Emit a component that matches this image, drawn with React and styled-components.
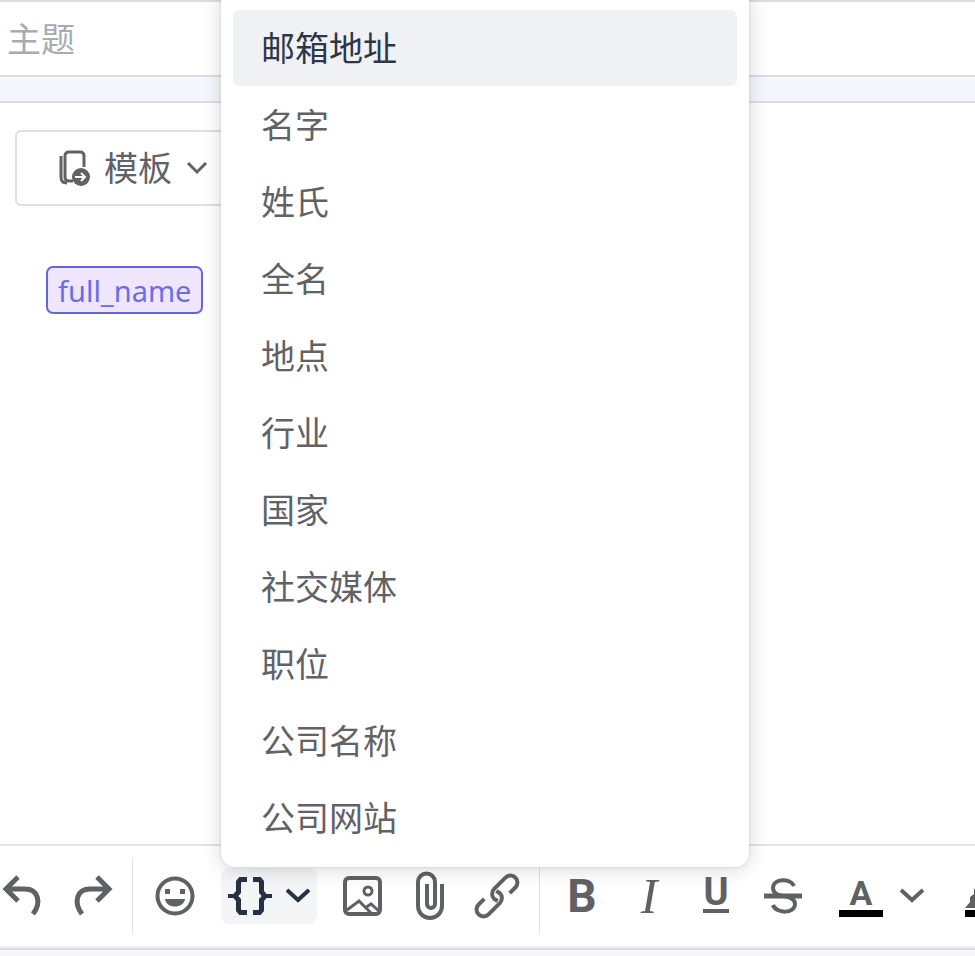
import React, { useState } from 'react';
import styled, { createGlobalStyle } from 'styled-components';

const GlobalStyle = createGlobalStyle`
    * {
        box-sizing: border-box;
    }
    body {
        margin: 0;
        overflow: hidden;
        background: #f5f7fd;
        font-family: 'Noto Sans', 'Noto Sans CJK SC', sans-serif;
        color: #606266;
    }
    button,
    input {
        font-family: inherit;
        color: inherit;
    }
`;

const Page = styled.div`
    display: flex;
    flex-direction: column;
    gap: 24px;
    min-height: 100vh;
    padding-bottom: 6px;
    overflow: hidden;
`;

const SubjectInput = styled.input`
    flex: none;
    width: 100%;
    height: 77px;
    padding: 0 7px;
    border: solid #dcdde4;
    border-width: 2px 0;
    border-radius: 0;
    background: #fff;
    font-size: 34px;
    outline: none;
    &::placeholder {
        color: #a8abb2;
        opacity: 1;
    }
`;

const Editor = styled.main`
    flex: 1;
    display: flex;
    flex-direction: column;
    background: #fff;
    border-top: 2px solid #dcdde4;
    border-bottom: 2px solid #d9dbe2;
`;

const Body = styled.div`
    flex: 1;
    display: flex;
    flex-direction: column;
    align-items: flex-start;
    gap: 60px;
    padding: 27px 15px;
`;

const TemplateButton = styled.button`
    display: flex;
    align-items: center;
    gap: 14px;
    height: 76px;
    padding: 0 41px;
    border: 2px solid #dcdfe3;
    border-radius: 6px;
    background: #fff;
    font-size: 34px;
    line-height: 48px;
`;

const Tag = styled.span`
    height: 48px;
    margin-left: 31px;
    padding: 0 10px;
    border: 2px solid #6366dc;
    border-radius: 7px;
    background: #efe6fd;
    color: #6a6de6;
    font-size: 29px;
    line-height: 46px;
`;

const Toolbar = styled.div`
    display: flex;
    align-items: center;
    height: 104px;
    border-top: 2px solid #e2e3e5;
    border-bottom: 2px solid #eeeff2;
`;

const Group = styled.div`
    flex: none;
    display: flex;
    align-items: center;
    gap: ${props => props.$gap || 11}px;
`;

const Section = styled(Group)`
    padding: 0 14px;
`;

const History = styled(Group)`
    padding-right: 16px;
`;

const Divider = styled.span`
    flex: none;
    width: 1px;
    height: 76px;
    background: #dfe2e6;
`;

const ToolButton = styled.button`
    display: flex;
    align-items: center;
    justify-content: center;
    width: ${props => props.$width || 56}px;
    height: 56px;
    padding: 0;
    border: none;
    background: transparent;
    color: #606164;
`;

const Letter = styled.span`
    font-family: ${props => (props.$serif ? "'Liberation Serif', serif" : 'Roboto, sans-serif')};
    font-size: ${props => props.$size || 46}px;
    font-style: ${props => (props.$serif ? 'italic' : 'normal')};
    font-weight: ${props => props.$weight || 700};
    line-height: 48px;
`;

const UnderlineLetter = styled(Letter)`
    height: 34px;
    border-bottom: 4px solid currentColor;
    line-height: 26px;
`;

const ColorButton = styled(ToolButton)`
    justify-content: flex-start;
    gap: 17px;
    width: 85px;
`;

const Swatch = styled.span`
    display: flex;
    align-items: flex-end;
    justify-content: center;
    width: 44px;
    height: 42px;
    border-bottom: 7px solid #000;
    ${Letter} {
        line-height: 34px;
    }
`;

const Dropdown = styled.div`
    position: relative;
`;

const VariableButton = styled(ToolButton)`
    gap: 14px;
    width: 96px;
    border-radius: 8px;
    background: #f4f5f6;
    color: #263244;
`;

const Menu = styled.ul`
    position: absolute;
    left: 0;
    bottom: 57px;
    z-index: 1;
    display: flex;
    flex-direction: column;
    gap: 1px;
    width: 528px;
    margin: 0;
    padding: 24px 12px 11px;
    border-radius: 14px;
    background: #fff;
    box-shadow: 0 2px 20px rgba(0, 0, 0, 0.16), 0 0 3px rgba(0, 0, 0, 0.12);
    list-style: none;
`;

const MenuItem = styled.button`
    display: block;
    width: 100%;
    height: 76px;
    padding: 0 28px;
    border: none;
    border-radius: 6px;
    background: ${props => (props.$active ? '#eff1f5' : 'transparent')};
    color: ${props => (props.$active ? '#2d3748' : '#606266')};
    font-size: 34px;
    line-height: 74px;
    text-align: left;
`;

function Icon({ width, height, stroke = 4, children }) {
    return (
        <svg
            width={width}
            height={height}
            viewBox={`0 0 ${width} ${height}`}
            fill="none"
            stroke="currentColor"
            strokeWidth={stroke}
            aria-hidden="true"
        >
            {children}
        </svg>
    );
}

const UndoIcon = () => (
    <Icon width={44} height={44} stroke={5}>
        <path d="M18 3L6 15L18 27M5 15H25C38 15 42 28 33 40" />
    </Icon>
);

const RedoIcon = () => (
    <Icon width={44} height={44} stroke={5}>
        <path d="M25 3L37 15L25 27M38 15H18C5 15 1 28 10 40" />
    </Icon>
);

const SmileIcon = () => (
    <Icon width={40} height={40}>
        <circle cx="20" cy="20" r="17.5" />
        <path
            d="M10 13h5v5h-5zM25 13h5v5h-5zM10 23h20c-1 10-19 10-20 0z"
            fill="currentColor"
            stroke="none"
        />
    </Icon>
);

const BracesIcon = () => (
    <Icon width={44} height={40} stroke={5}>
        <path d="M19 3.5H12.5L10.5 6V16L7 20L10.5 24V34L12.5 36.5H19" />
        <path d="M25 3.5H31.5L33.5 6V16L37 20L33.5 24V34L31.5 36.5H25" />
        <path d="M0 20H8M36 20H44" strokeWidth="4" />
    </Icon>
);

const ChevronIcon = () => (
    <Icon width={24} height={16}>
        <path d="M1 2L12 12L23 2" />
    </Icon>
);

const SmallChevronIcon = () => (
    <Icon width={22} height={16} stroke={3}>
        <path d="M2 3L11 12L20 3" />
    </Icon>
);

const ImageIcon = () => (
    <Icon width={40} height={40}>
        <rect x="2" y="2" width="35" height="36" rx="4" />
        <circle cx="25" cy="15" r="4" strokeWidth="3" />
        <path d="M4 34L16 25L29 38M22 32L28 28L37 36" strokeWidth="3" />
    </Icon>
);

const ClipIcon = () => (
    <Icon width={32} height={52}>
        <path d="M28 14V36a12 12 0 0 1-24 0V12a8.5 8.5 0 0 1 17 0V34a4 4 0 0 1-8 0V14" />
    </Icon>
);

const LinkIcon = () => (
    <Icon width={48} height={48}>
        <g transform="translate(24 24) rotate(-45)">
            <path d="M11 7H19a7 7 0 0 0 0-14H3a7 7 0 0 0-7 7l1 4" />
            <path d="M-11-7H-19a7 7 0 0 0 0 14H-3a7 7 0 0 0 7-7l-1-4" />
        </g>
    </Icon>
);

const StrikeIcon = () => (
    <Icon width={38} height={36}>
        <path d="M30 8C27 0 9 0 9 10C9 14 12 17 19 18C27 19 31 21 31 26C31 36 12 36 9 27" />
        <path d="M0 18H38" strokeWidth="5" />
    </Icon>
);

const HighlightIcon = () => (
    <Icon width={44} height={26} stroke={0}>
        <path d="M0 24L5 18V13L9 10V5L20 0L38 16L26 24Z" fill="currentColor" />
    </Icon>
);

const TemplateIcon = () => (
    <Icon width={32} height={38} stroke={3}>
        <path d="M15 32H11Q7 32 7 28V7Q7 3 11 3H22Q26 3 26 7V18" />
        <path d="M3 7V28Q3 34 9 34" />
        <circle cx="23" cy="28" r="9" fill="currentColor" stroke="none" />
        <path d="M17 28H27M23 24L27 28L23 32" stroke="#fff" strokeWidth="2" />
    </Icon>
);

const variables = [
    '邮箱地址',
    '名字',
    '姓氏',
    '全名',
    '地点',
    '行业',
    '国家',
    '社交媒体',
    '职位',
    '公司名称',
    '公司网站',
];

function VariableDropdown() {
    const [isOpen, setIsOpen] = useState(true);
    const [active, setActive] = useState(variables[0]);

    return (
        <Dropdown>
            <VariableButton
                aria-label="变量"
                aria-expanded={isOpen}
                onClick={() => setIsOpen(open => !open)}
            >
                <BracesIcon />
                <ChevronIcon />
            </VariableButton>
            {isOpen && (
                <Menu>
                    {variables.map(name => (
                        <li key={name}>
                            <MenuItem $active={name === active} onMouseEnter={() => setActive(name)}>
                                {name}
                            </MenuItem>
                        </li>
                    ))}
                </Menu>
            )}
        </Dropdown>
    );
}

export default function App() {
    return (
        <Page>
            <GlobalStyle />
            <SubjectInput aria-label="主题" placeholder="主题" />
            <Editor>
                <Body>
                    <TemplateButton>
                        <TemplateIcon />
                        模板
                        <SmallChevronIcon />
                    </TemplateButton>
                    <Tag>full_name</Tag>
                </Body>
                <Toolbar>
                    <History $gap={28}>
                        <ToolButton $width={44} aria-label="撤销">
                            <UndoIcon />
                        </ToolButton>
                        <ToolButton $width={44} aria-label="重做">
                            <RedoIcon />
                        </ToolButton>
                    </History>
                    <Divider />
                    <Section $gap={18}>
                        <ToolButton aria-label="表情">
                            <SmileIcon />
                        </ToolButton>
                        <VariableDropdown />
                        <Group>
                            <ToolButton aria-label="图片">
                                <ImageIcon />
                            </ToolButton>
                            <ToolButton aria-label="附件">
                                <ClipIcon />
                            </ToolButton>
                            <ToolButton aria-label="链接">
                                <LinkIcon />
                            </ToolButton>
                        </Group>
                    </Section>
                    <Divider />
                    <Section>
                        <ToolButton aria-label="粗体">
                            <Letter>B</Letter>
                        </ToolButton>
                        <ToolButton aria-label="斜体">
                            <Letter $serif $size={50} $weight={400}>
                                I
                            </Letter>
                        </ToolButton>
                        <ToolButton aria-label="下划线">
                            <UnderlineLetter $size={38}>U</UnderlineLetter>
                        </ToolButton>
                        <ToolButton aria-label="删除线">
                            <StrikeIcon />
                        </ToolButton>
                    </Section>
                    <Section $gap={41}>
                        <ColorButton aria-label="文字颜色">
                            <Swatch>
                                <Letter $size={34}>A</Letter>
                            </Swatch>
                            <ChevronIcon />
                        </ColorButton>
                        <ColorButton aria-label="背景颜色">
                            <Swatch>
                                <HighlightIcon />
                            </Swatch>
                            <ChevronIcon />
                        </ColorButton>
                    </Section>
                </Toolbar>
            </Editor>
        </Page>
    );
}
